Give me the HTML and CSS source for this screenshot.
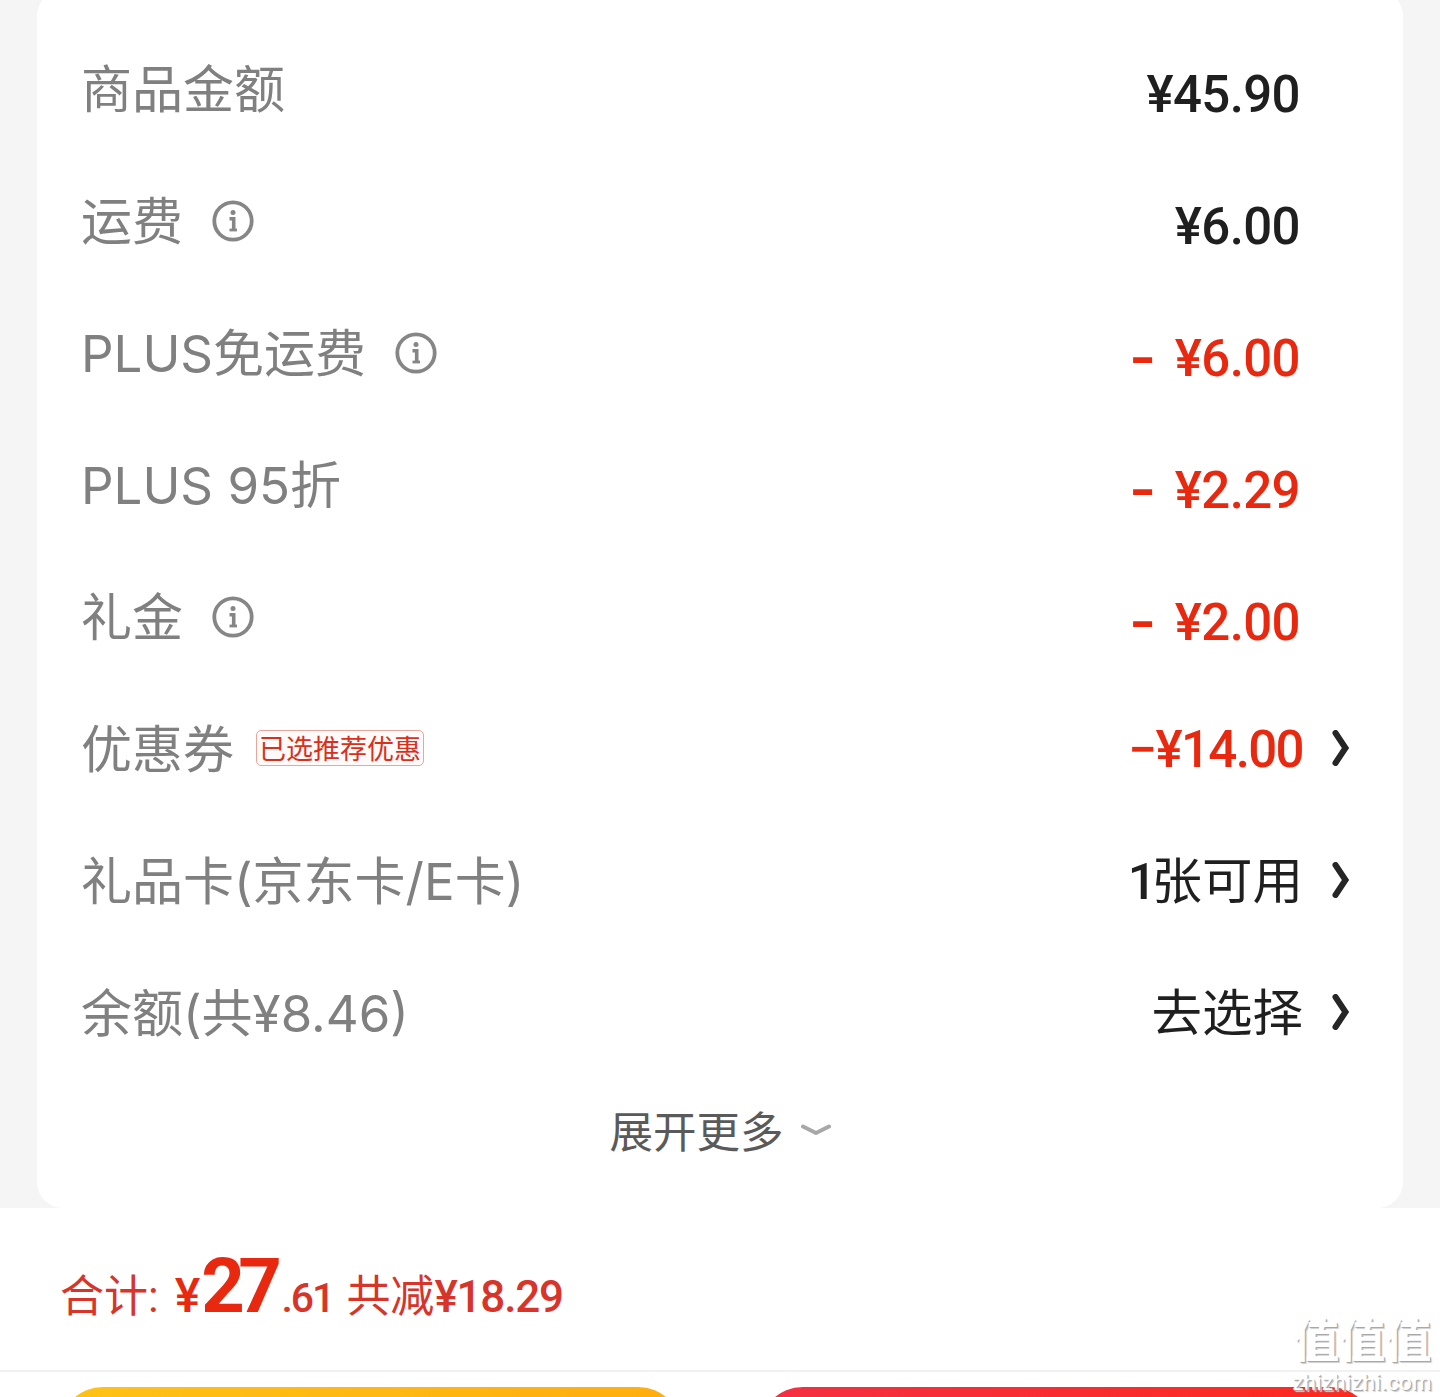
FILE: index.html
```html
<!DOCTYPE html>
<html lang="zh-CN">
<head>
<meta charset="utf-8">
<title>订单金额</title>
<link rel="stylesheet" href="styles.css">
</head>
<body>
<svg class="defs" width="0" height="0" aria-hidden="true">
  <symbol id="info" viewBox="0 0 42 42">
    <circle cx="21" cy="21" r="18.7" fill="none" stroke="currentColor" stroke-width="3.8"/>
    <circle cx="21" cy="12.5" r="2.5" fill="currentColor"/>
    <path d="M17.5 18.8h4.2V30" fill="none" stroke="currentColor" stroke-width="3.6"/>
    <path d="M17.5 30h7.5" fill="none" stroke="currentColor" stroke-width="2.8"/>
  </symbol>
  <symbol id="chev" viewBox="0 0 18 36">
    <path d="M3.5 3 L13.5 18 L3.5 33" fill="none" stroke="currentColor" stroke-width="6" stroke-linecap="round" stroke-linejoin="miter"/>
  </symbol>
</svg>
<main class="page">
  <section class="card">
    <div class="row"><div class="label">商品金额</div><div class="value money">¥45.90</div></div>
    <div class="row"><div class="label">运费<svg class="info"><use href="#info"/></svg></div><div class="value money">¥6.00</div></div>
    <div class="row"><div class="label">PLUS免运费<svg class="info"><use href="#info"/></svg></div><div class="value money red"><span class="dash">-</span>¥6.00</div></div>
    <div class="row"><div class="label">PLUS 95折</div><div class="value money red"><span class="dash">-</span>¥2.29</div></div>
    <div class="row"><div class="label">礼金<svg class="info"><use href="#info"/></svg></div><div class="value money red"><span class="dash">-</span>¥2.00</div></div>
    <div class="row link"><div class="label">优惠券<span class="badge">已选推荐优惠</span></div><div class="value money red tight">−¥14.00</div><svg class="chev"><use href="#chev"/></svg></div>
    <div class="row link"><div class="label">礼品卡(京东卡/E卡)</div><div class="value"><span class="one">1</span>张可用</div><svg class="chev"><use href="#chev"/></svg></div>
    <div class="row link"><div class="label">余额(共¥8.46)</div><div class="value">去选择</div><svg class="chev"><use href="#chev"/></svg></div>
    <div class="more"><span>展开更多</span><svg class="down" viewBox="0 0 30 14"><path d="M2 3.5 L15 10 L28 3.5" fill="none" stroke="currentColor" stroke-width="4" stroke-linecap="round" stroke-linejoin="round"/></svg></div>
  </section>
  <section class="total">
    <span class="t-label">合计:</span>
    <span class="t-yen">¥</span><span class="t-int">27</span><span class="t-dec">.61</span>
    <span class="t-save">共减<span class="t-num">¥18.29</span></span>
  </section>
  <section class="actions">
    <div class="btn yellow"></div>
    <div class="btn redbtn"></div>
  </section>
  <div class="mark"><span class="mark-big">值值值</span><span class="mark-url">zhizhizhi.com</span></div>
</main>
</body>
</html>
```
FILE: styles.css
```css
html, body { margin: 0; padding: 0; }
body {
  background: #f5f5f5;
  width: 1440px;
  height: 1397px;
  overflow: hidden;
  font-family: "Noto Sans CJK SC", "Noto Sans", sans-serif;
}
.defs { position: absolute; }
.page { position: relative; height: 1397px; overflow: hidden; }
.card {
  width: 1366px;
  margin: -10px 0 0 37px;
  padding: 34px 53px 0 44px;
  box-sizing: border-box;
  height: 1218px;
  background: #fff;
  border-radius: 26px;
}
.row {
  height: 132px;
  display: flex;
  align-items: center;
  justify-content: space-between;
  padding-right: 50px;
}
.row.link { padding-right: 0; }
.label {
  display: flex;
  align-items: center;
  font-size: 51px;
  line-height: 60px;
  font-weight: 400;
  color: #808080;
  font-family: "Inter", "Noto Sans CJK SC", sans-serif;
  white-space: nowrap;
}
.info { width: 42px; height: 42px; margin: 0 0 2px 29px; color: #868686; }
.badge {
  margin: 0 0 4px 22px;
  height: 36px;
  width: 168px;
  box-sizing: border-box;
  border: 1px solid #e8a79c;
  border-radius: 5px;
  display: flex;
  align-items: center;
  justify-content: center;
  background: #fffafa;
  color: #d9301c;
  font-family: "Noto Sans CJK SC", sans-serif;
  font-size: 27px;
  font-weight: 400;
  line-height: 34px;
  white-space: nowrap;
}
.value {
  margin-left: auto;
  font-size: 50.5px;
  line-height: 60px;
  color: #1f1f1f;
  font-weight: 400;
  font-family: "Roboto", "Noto Sans CJK SC", sans-serif;
  white-space: nowrap;
}
.money { font-weight: 500; font-size: 51px; letter-spacing: -0.6px; margin-top: 10px; }
.row.link .money { margin-top: 0; }
.tight { letter-spacing: -1.6px; }
.one { font-weight: 500; letter-spacing: -5px; }
.red { color: #e8290f; }
.dash {
  display: inline-block;
  margin-right: 19px;
  font-weight: 700;
  transform: scaleX(1.35);
  transform-origin: right center;
}
.chev { width: 18px; height: 36px; margin: 0 0 4px 29px; color: #262626; flex: none; }
.more {
  height: 90px;
  padding-top: 8px;
  box-sizing: border-box;
  margin-right: -9px;
  display: flex;
  align-items: center;
  justify-content: center;
  gap: 17px;
  font-size: 43.5px;
  font-weight: 400;
  color: #5a5a5a;
}
.down { width: 30px; height: 14px; color: #a8a8a8; margin-top: 2px; }
.total {
  height: 164px;
  background: #fff;
  box-sizing: border-box;
  padding: 0 0 7px 60px;
  display: flex;
  align-items: baseline;
  align-content: center;
  flex-wrap: wrap;
  color: #e8290f;
  border-bottom: 2px solid #f1f1f1;
  font-family: "Roboto", "Noto Sans CJK SC", sans-serif;
}
.t-label { font-size: 44px; font-weight: 400; color: #d8352a; }
.t-yen { font-size: 48px; font-weight: 500; margin-left: 16px; }
.t-int { font-size: 76px; font-weight: 700; letter-spacing: -6.5px; margin-left: 1px; }
.t-dec { font-size: 41px; font-weight: 500; letter-spacing: -2px; margin-left: 6px; color: #d8352a; }
.t-save { font-size: 44px; font-weight: 400; margin-left: 13px; color: #d8352a; }
.t-num { font-weight: 500; letter-spacing: -1.2px; }
.actions {
  height: 236px;
  background: #fff;
  display: flex;
  padding: 15px 66px 0 59px;
  justify-content: space-between;
}
.btn { height: 90px; border-radius: 44px; }
.yellow { width: 623px; background: linear-gradient(90deg, #ffc216, #ffad0d); }
.redbtn { width: 615px; background: linear-gradient(90deg, #f52f43, #fd2a1d); }
.mark {
  position: absolute;
  right: 8px;
  top: 1312px;
  display: flex;
  flex-direction: column;
  align-items: center;
  gap: 9px;
  color: #fff;
  text-shadow: 1px 1px 0 #a8a8a8, 2px 2px 1px #cfcfcf;
}
.mark-big { font-size: 46px; line-height: 50px; font-weight: 700; }
.mark-url { font-size: 22px; line-height: 24px; font-family: "Roboto", sans-serif; letter-spacing: 0.4px; }
```
